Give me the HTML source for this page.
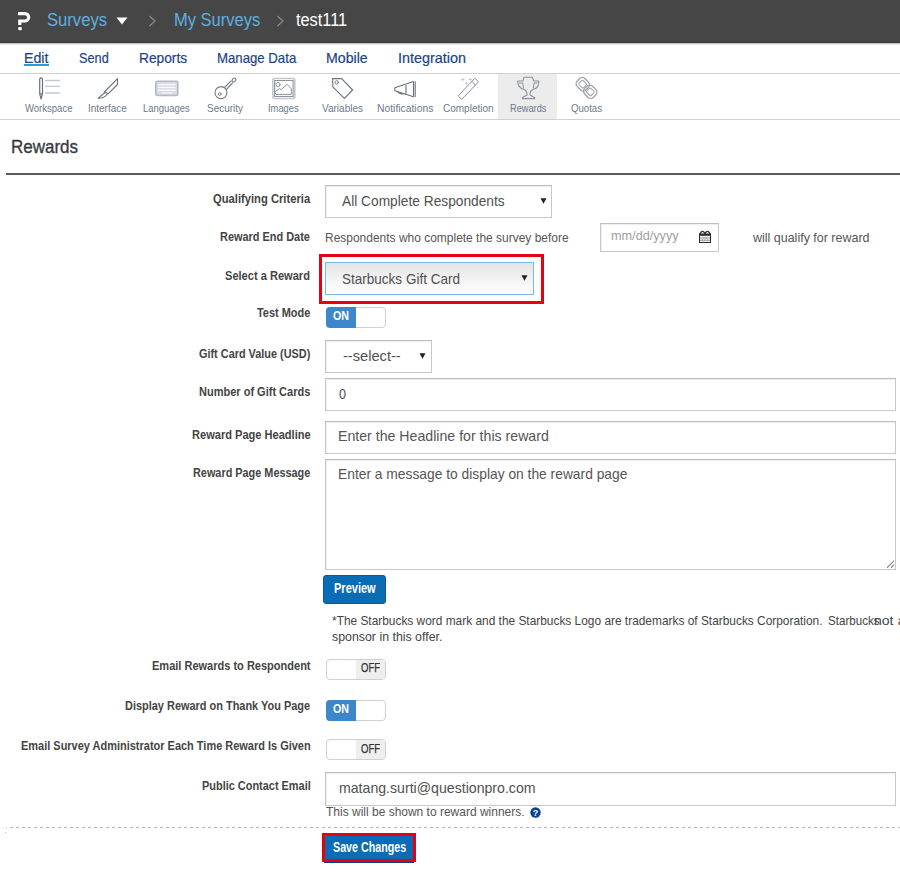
<!DOCTYPE html><html><head><meta charset="utf-8"><style>
html,body{margin:0;padding:0;background:#fff;width:900px;height:874px;overflow:hidden;position:relative;font-family:"Liberation Sans",sans-serif;}
.t{position:absolute;white-space:nowrap;transform-origin:0 0;}
.b{position:absolute;box-sizing:border-box;}
</style></head><body>
<div class="b" style="left:0px;top:0px;width:900px;height:43px;background:#464646;"></div>
<div class="b" style="left:0px;top:42px;width:900px;height:1px;background:#3a3a3a;"></div>
<div class="b" style="left:0px;top:43px;width:900px;height:1px;background:#c4c4c4;"></div>
<div class="b" style="left:0px;top:44px;width:900px;height:1px;background:#eeeeee;"></div>
<div class="t" style="left:47.00px;top:11.00px;font-size:18px;line-height:18px;color:#5eb0e0;transform:scaleX(0.9234);">Surveys</div>
<svg class="b" style="left:116px;top:17px" width="12" height="8"><path d="M0.5 0.5 L11.5 0.5 L6 7.5Z" fill="#fff"/></svg>
<svg class="b" style="left:148px;top:15px" width="9" height="12"><path d="M1.5 1 L7 6 L1.5 11" fill="none" stroke="#8a8a8a" stroke-width="1.3"/></svg>
<div class="t" style="left:173.80px;top:11.00px;font-size:18px;line-height:18px;color:#5eb0e0;transform:scaleX(0.9165);">My Surveys</div>
<svg class="b" style="left:276px;top:15px" width="9" height="12"><path d="M1.5 1 L7 6 L1.5 11" fill="none" stroke="#8a8a8a" stroke-width="1.3"/></svg>
<div class="t" style="left:295.60px;top:11.00px;font-size:18px;line-height:18px;color:#fff;transform:scaleX(0.9070);">test111</div>
<svg class="b" style="left:0;top:0" width="40" height="43"><path d="M18 13.6 H25 A3.7 3.7 0 0 1 25 21 H19.8 V25" fill="none" stroke="#fff" stroke-width="3.2"/><rect x="18.2" y="26.9" width="3.6" height="3.4" rx="1" fill="#fff"/></svg>
<div class="t" style="left:24.40px;top:50.00px;font-size:15px;line-height:15px;color:#1b4487;transform:scaleX(0.9469);-webkit-text-stroke:0.2px #1b4487;">Edit</div>
<div class="b" style="left:24px;top:64px;width:25px;height:2px;background:#2b9ad8;"></div>
<div class="t" style="left:78.60px;top:50.00px;font-size:15px;line-height:15px;color:#1b4487;transform:scaleX(0.8480);-webkit-text-stroke:0.2px #1b4487;">Send</div>
<div class="t" style="left:138.90px;top:50.00px;font-size:15px;line-height:15px;color:#1b4487;transform:scaleX(0.9162);-webkit-text-stroke:0.2px #1b4487;">Reports</div>
<div class="t" style="left:216.70px;top:50.00px;font-size:15px;line-height:15px;color:#1b4487;transform:scaleX(0.8796);-webkit-text-stroke:0.2px #1b4487;">Manage Data</div>
<div class="t" style="left:326.00px;top:50.00px;font-size:15px;line-height:15px;color:#1b4487;transform:scaleX(0.9440);-webkit-text-stroke:0.2px #1b4487;">Mobile</div>
<div class="t" style="left:397.70px;top:50.00px;font-size:15px;line-height:15px;color:#1b4487;transform:scaleX(0.9594);-webkit-text-stroke:0.2px #1b4487;">Integration</div>
<div class="b" style="left:0px;top:73px;width:900px;height:1px;background:#d0d0d0;"></div>
<div class="b" style="left:498px;top:74px;width:59px;height:45px;background:#ececec;"></div>
<div class="t" style="left:25.00px;top:102.50px;font-size:11px;line-height:11px;color:#6b7a8c;transform:scaleX(0.8662);">Workspace</div>
<div class="t" style="left:88.30px;top:102.50px;font-size:11px;line-height:11px;color:#6b7a8c;transform:scaleX(0.9044);">Interface</div>
<div class="t" style="left:143.00px;top:102.50px;font-size:11px;line-height:11px;color:#6b7a8c;transform:scaleX(0.8595);">Languages</div>
<div class="t" style="left:206.80px;top:102.50px;font-size:11px;line-height:11px;color:#6b7a8c;transform:scaleX(0.9041);">Security</div>
<div class="t" style="left:268.30px;top:102.50px;font-size:11px;line-height:11px;color:#6b7a8c;transform:scaleX(0.8509);">Images</div>
<div class="t" style="left:321.70px;top:102.50px;font-size:11px;line-height:11px;color:#6b7a8c;transform:scaleX(0.9124);">Variables</div>
<div class="t" style="left:376.70px;top:102.50px;font-size:11px;line-height:11px;color:#6b7a8c;transform:scaleX(0.9400);">Notifications</div>
<div class="t" style="left:443.00px;top:102.50px;font-size:11px;line-height:11px;color:#6b7a8c;transform:scaleX(0.9091);">Completion</div>
<div class="t" style="left:510.00px;top:102.50px;font-size:11px;line-height:11px;color:#6b7a8c;transform:scaleX(0.8388);">Rewards</div>
<div class="t" style="left:571.00px;top:102.50px;font-size:11px;line-height:11px;color:#6b7a8c;transform:scaleX(0.8739);">Quotas</div>
<div class="b" style="left:0px;top:119px;width:900px;height:1px;background:#d0d0d0;"></div>
<svg class="b" style="left:0;top:74px" width="900" height="45" fill="none" stroke-linejoin="round" stroke-linecap="round">
<g transform="translate(0,-74)">
<!-- workspace -->
<path d="M39.7 93.8 V79 Q41.1 76.6 42.5 79 V93.8 Z M39.7 93.8 L41.1 99 L42.5 93.8" stroke="#68717e" stroke-width="1.2"/>
<path d="M45.5 80.5H59.5 M45.5 86.3H59.5 M45.5 93H59.5" stroke="#c3c8d0" stroke-width="1.3"/>
<!-- interface -->
<path d="M117.5 78.7 V84.5 L108.3 93.7 M117.5 78.7 L104.3 92 M104.3 92 L108.3 93.7 M105 92.5 L98.2 98.2 Q104 98.5 107.5 94" stroke="#68717e" stroke-width="1.1"/>
<!-- languages keyboard -->
<rect x="155.8" y="81.3" width="22" height="14.2" rx="1.5" fill="#d9dde3" stroke="#b3b9c2" stroke-width="1.6"/>
<path d="M158.5 84.6H175 M158.5 87.4H175 M158.5 90.2H175" stroke="#fbfbfc" stroke-width="1.3" stroke-dasharray="1.5 1.1"/>
<path d="M161.5 93H172" stroke="#f4f5f7" stroke-width="1.1"/>
<!-- security key -->
<circle cx="221" cy="92.6" r="6" stroke="#737b87" stroke-width="1.1"/>
<circle cx="219.7" cy="94" r="1.4" stroke="#737b87" stroke-width="0.9"/>
<path d="M224.5 87.5 L231 80.8 M226.3 89.6 L232.5 83" stroke="#737b87" stroke-width="1.1"/>
<ellipse cx="234" cy="80" rx="2.2" ry="1.6" transform="rotate(-45 234 80)" stroke="#737b87" stroke-width="1.1"/>
<!-- images -->
<rect x="272.8" y="78.5" width="22" height="20" rx="2" stroke="#c3c8d0" stroke-width="1.6"/>
<rect x="274.6" y="80.5" width="18.5" height="16" stroke="#8b929d" stroke-width="1.1"/>
<circle cx="278" cy="84.6" r="2.1" stroke="#8b929d" stroke-width="1"/>
<path d="M275 92 L279.5 88.5 L281.3 89.6 L287 84.3 L291.3 88.8 V94.4 H276.3 Z" stroke="#8b929d" stroke-width="1"/>
<!-- variables tag -->
<path d="M332.6 78.6 H341.6 L352.6 90 L344.5 98.3 L332.8 86.8 Z" stroke="#68717e" stroke-width="1.1"/>
<circle cx="336.7" cy="82.4" r="1.7" stroke="#68717e" stroke-width="0.9"/>
<!-- notifications megaphone -->
<path d="M413.5 81.5 L394.8 87.8 V90.8 L413.5 96.8 Z M406 85.5 V93.6 M415.2 81.8 V96.5" stroke="#68717e" stroke-width="1.1"/>
<path d="M398 91.8 Q399 94.6 403.5 93.7" stroke="#68717e" stroke-width="1.1"/>
<!-- completion wand -->
<path d="M458.5 95.5 L474.8 78.3 L478.5 81.8 L462 99 Z M471.8 81.3 L475.3 85" stroke="#8b929d" stroke-width="1"/>
<path d="M461.5 79.5 h2.6 M462.8 78.2 v2.6 M469 79.5 h2.6 M470.3 78.2 v2.6 M465.3 83.5 h2 M466.3 82.5 v2.6 M477.3 87.6 h0.6" stroke="#c3c8d0" stroke-width="1"/>
<!-- rewards trophy -->
<path d="M524 77.3 H532.3 L533.8 81 H538.8 Q539.5 87.5 533 89.5 Q529.5 91.5 530 95 L534.5 97.5 V98.6 H522.5 V97.5 L527 95 Q527.5 91.5 524 89.5 Q517.5 87.5 517.8 81 H522.8 Z" stroke="#8b929d" stroke-width="1.1"/>
<path d="M519.5 83 H522.7 L523.5 88 M537.2 83 H534 L533.3 88" stroke="#8b929d" stroke-width="1"/>
<!-- quotas chain -->
<g transform="rotate(-45 586.5 88)">
<rect x="581" y="76.5" width="11" height="12.5" rx="4" stroke="#9aa1ab" stroke-width="1.3"/>
<rect x="583.6" y="79.3" width="5.8" height="6.5" rx="1.2" stroke="#9aa1ab" stroke-width="1"/>
<rect x="581" y="87" width="11" height="12.5" rx="4" stroke="#9aa1ab" stroke-width="1.3"/>
<rect x="583.6" y="90.2" width="5.8" height="6.5" rx="1.2" stroke="#9aa1ab" stroke-width="1"/>
</g>
</g></svg>
<div class="t" style="left:10.50px;top:138.25px;font-size:18.5px;line-height:18.5px;color:#373b42;transform:scaleX(0.9180);-webkit-text-stroke:0.35px #373b42;">Rewards</div>
<div class="b" style="left:6px;top:173px;width:894px;height:2px;background:#5a5a5a;"></div>
<div class="t" style="left:213.10px;top:192.00px;font-size:13px;line-height:13px;color:#444;font-weight:bold;transform:scaleX(0.8619);">Qualifying Criteria</div>
<div class="t" style="left:220.40px;top:230.00px;font-size:13px;line-height:13px;color:#444;font-weight:bold;transform:scaleX(0.8408);">Reward End Date</div>
<div class="t" style="left:225.40px;top:269.00px;font-size:13px;line-height:13px;color:#444;font-weight:bold;transform:scaleX(0.8515);">Select a Reward</div>
<div class="t" style="left:257.00px;top:306.00px;font-size:13px;line-height:13px;color:#444;font-weight:bold;transform:scaleX(0.8419);">Test Mode</div>
<div class="t" style="left:199.00px;top:347.00px;font-size:13px;line-height:13px;color:#444;font-weight:bold;transform:scaleX(0.8373);">Gift Card Value (USD)</div>
<div class="t" style="left:199.00px;top:385.00px;font-size:13px;line-height:13px;color:#444;font-weight:bold;transform:scaleX(0.8468);">Number of Gift Cards</div>
<div class="t" style="left:191.70px;top:428.00px;font-size:13px;line-height:13px;color:#444;font-weight:bold;transform:scaleX(0.8506);">Reward Page Headline</div>
<div class="t" style="left:193.00px;top:466.00px;font-size:13px;line-height:13px;color:#444;font-weight:bold;transform:scaleX(0.8366);">Reward Page Message</div>
<div class="t" style="left:151.80px;top:659.00px;font-size:13px;line-height:13px;color:#444;font-weight:bold;transform:scaleX(0.8473);">Email Rewards to Respondent</div>
<div class="t" style="left:125.20px;top:699.00px;font-size:13px;line-height:13px;color:#444;font-weight:bold;transform:scaleX(0.8420);">Display Reward on Thank You Page</div>
<div class="t" style="left:20.60px;top:739.00px;font-size:13px;line-height:13px;color:#444;font-weight:bold;transform:scaleX(0.8441);">Email Survey Administrator Each Time Reward Is Given</div>
<div class="t" style="left:201.60px;top:779.00px;font-size:13px;line-height:13px;color:#444;font-weight:bold;transform:scaleX(0.8408);">Public Contact Email</div>
<div class="b" style="left:325px;top:185px;width:227px;height:33px;border:1px solid #c8c8c8;border-top-color:#bdbdbd;background:#fff;box-shadow:inset 1px 1px 1px rgba(0,0,0,0.07);"></div>
<div class="t" style="left:341.80px;top:193.00px;font-size:15px;line-height:15px;color:#505050;transform:scaleX(0.9161);">All Complete Respondents</div>
<svg class="b" style="left:539.5px;top:198px" width="7" height="6"><path d="M0.5 0.3 L6.5 0.3 L3.5 5.8Z" fill="#222"/></svg>
<div class="t" style="left:325.00px;top:230.85px;font-size:13.3px;line-height:13.3px;color:#555;transform:scaleX(0.9006);">Respondents who complete the survey before</div>
<div class="b" style="left:600px;top:223px;width:119px;height:29px;border:1px solid #c8c8c8;border-top-color:#bdbdbd;background:#fff;box-shadow:inset 1px 1px 1px rgba(0,0,0,0.07);"></div>
<div class="t" style="left:611.00px;top:229.00px;font-size:13px;line-height:13px;color:#a0a0a0;transform:scaleX(0.9747);">mm/dd/yyyy</div>
<svg class="b" style="left:698px;top:230px" width="14" height="14"><path d="M2 4.5 Q2.5 1.3 4.5 1.3 Q6.5 1.3 7 4.5 Q7.5 1.3 9.5 1.3 Q11.5 1.3 12 4.5" fill="none" stroke="#333" stroke-width="1.3"/><rect x="1.5" y="4" width="11" height="8.5" fill="#fff" stroke="#2a2a2a" stroke-width="1"/><rect x="1.5" y="4" width="11" height="1.8" fill="#2a2a2a"/><path d="M2 8H12M2 10.2H12" stroke="#666" stroke-width="0.8"/><path d="M4.5 6V12M7 6V12M9.5 6V12" stroke="#bbb" stroke-width="0.6"/></svg>
<div class="t" style="left:753.26px;top:230.85px;font-size:13.3px;line-height:13.3px;color:#555;transform:scaleX(0.9386);">will qualify for reward</div>
<div class="b" style="left:319px;top:254px;width:225px;height:50px;border:3px solid #e60012;"></div>
<div class="b" style="left:325px;top:262px;width:209px;height:33px;border:1px solid #7db8ea;background:linear-gradient(#e4e4e4,#fafafa 78%,#fff);"></div>
<div class="t" style="left:342.10px;top:271.00px;font-size:15px;line-height:15px;color:#505050;transform:scaleX(0.9016);">Starbucks Gift Card</div>
<svg class="b" style="left:520.5px;top:275px" width="7" height="6"><path d="M0.5 0.3 L6.5 0.3 L3.5 5.8Z" fill="#222"/></svg>
<div class="b" style="left:326px;top:307px;width:60px;height:21px;border:1px solid #cfcfcf;border-radius:4px;background:#fff;overflow:hidden;"></div>
<div class="b" style="left:326px;top:307px;width:30px;height:21px;background:#3d86c9;border-radius:4px 0 0 4px;"></div>
<div class="t" style="left:332.60px;top:309.75px;font-size:12.5px;line-height:12.5px;color:#fff;font-weight:bold;transform:scaleX(0.8533);">ON</div>
<div class="b" style="left:325px;top:340px;width:107px;height:33px;border:1px solid #c8c8c8;border-top-color:#bdbdbd;background:#fff;box-shadow:inset 1px 1px 1px rgba(0,0,0,0.07);"></div>
<div class="t" style="left:342.70px;top:348.00px;font-size:15px;line-height:15px;color:#505050;transform:scaleX(0.9751);">--select--</div>
<svg class="b" style="left:419px;top:353px" width="7" height="6"><path d="M0.5 0.3 L6.5 0.3 L3.5 5.8Z" fill="#222"/></svg>
<div class="b" style="left:325px;top:378px;width:571px;height:33px;border:1px solid #c8c8c8;border-top-color:#bdbdbd;background:#fff;box-shadow:inset 1px 1px 1px rgba(0,0,0,0.07);"></div>
<div class="t" style="left:338.50px;top:386.00px;font-size:15px;line-height:15px;color:#505050;transform:scaleX(0.8408);">0</div>
<div class="b" style="left:325px;top:421px;width:571px;height:33px;border:1px solid #c8c8c8;border-top-color:#bdbdbd;background:#fff;box-shadow:inset 1px 1px 1px rgba(0,0,0,0.07);"></div>
<div class="t" style="left:338.40px;top:428.00px;font-size:15px;line-height:15px;color:#555;transform:scaleX(0.9435);">Enter the Headline for this reward</div>
<div class="b" style="left:325px;top:459px;width:571px;height:111px;border:1px solid #c8c8c8;border-top-color:#bdbdbd;background:#fff;box-shadow:inset 1px 1px 1px rgba(0,0,0,0.07);"></div>
<div class="t" style="left:338.40px;top:466.00px;font-size:15px;line-height:15px;color:#555;transform:scaleX(0.9205);">Enter a message to display on the reward page</div>
<svg class="b" style="left:885px;top:559px" width="10" height="10"><path d="M8.8 2.2 L2.3 8.5 M8.8 6 L6.3 8.5" stroke="#8a8a8a" stroke-width="1.1" stroke-linecap="round"/></svg>
<div class="b" style="left:323px;top:575px;width:63px;height:29px;background:#0b6cb6;border:1px solid #0a5a98;border-radius:3px;"></div>
<div class="t" style="left:334.30px;top:581.00px;font-size:14px;line-height:14px;color:#fff;font-weight:bold;transform:scaleX(0.7869);">Preview</div>
<div class="t" style="left:332.30px;top:613.85px;font-size:13.3px;line-height:13.3px;color:#444;transform:scaleX(0.8945);">*The Starbucks word mark and the Starbucks Logo are trademarks of Starbucks Corporation.</div>
<div class="t" style="left:827.50px;top:613.85px;font-size:13.3px;line-height:13.3px;color:#444;transform:scaleX(0.8711);">Starbucks</div>
<div class="t" style="left:874.00px;top:613.85px;font-size:13.3px;line-height:13.3px;color:#444;transform:scaleX(1.0548);">not</div>
<div class="t" style="left:897.80px;top:613.85px;font-size:13.3px;line-height:13.3px;color:#444;">a</div>
<div class="t" style="left:332.30px;top:629.85px;font-size:13.3px;line-height:13.3px;color:#444;transform:scaleX(0.9295);">sponsor in this offer.</div>
<div class="b" style="left:326px;top:659px;width:60px;height:21px;border:1px solid #cfcfcf;border-radius:4px;background:#fff;"></div>
<div class="b" style="left:356px;top:660px;width:29px;height:19px;background:#eeeeee;border-radius:0 3px 3px 0;"></div>
<div class="t" style="left:360.80px;top:662.00px;font-size:12px;line-height:12px;color:#333;transform:scaleX(0.7917);-webkit-text-stroke:0.25px #333;">OFF</div>
<div class="b" style="left:326px;top:699.5px;width:60px;height:21px;border:1px solid #cfcfcf;border-radius:4px;background:#fff;overflow:hidden;"></div>
<div class="b" style="left:326px;top:699.5px;width:30px;height:21px;background:#3d86c9;border-radius:4px 0 0 4px;"></div>
<div class="t" style="left:332.60px;top:702.75px;font-size:12.5px;line-height:12.5px;color:#fff;font-weight:bold;transform:scaleX(0.8533);">ON</div>
<div class="b" style="left:326px;top:739.3px;width:60px;height:21px;border:1px solid #cfcfcf;border-radius:4px;background:#fff;"></div>
<div class="b" style="left:356px;top:740.3px;width:29px;height:19px;background:#eeeeee;border-radius:0 3px 3px 0;"></div>
<div class="t" style="left:360.80px;top:743.00px;font-size:12px;line-height:12px;color:#333;transform:scaleX(0.7917);-webkit-text-stroke:0.25px #333;">OFF</div>
<div class="b" style="left:325px;top:772px;width:571px;height:34px;border:1px solid #c8c8c8;border-top-color:#bdbdbd;background:#fff;box-shadow:inset 1px 1px 1px rgba(0,0,0,0.07);"></div>
<div class="t" style="left:338.50px;top:780.00px;font-size:15px;line-height:15px;color:#505050;transform:scaleX(0.9418);">matang.surti@questionpro.com</div>
<div class="t" style="left:325.70px;top:804.85px;font-size:13.3px;line-height:13.3px;color:#555;transform:scaleX(0.9017);">This will be shown to reward winners.</div>
<svg class="b" style="left:530px;top:807px" width="11" height="11"><circle cx="5.5" cy="5.5" r="5.2" fill="#0b4391"/><text x="5.5" y="9" font-size="9" font-weight="bold" text-anchor="middle" fill="#fff" font-family="Liberation Sans">?</text></svg>
<div class="b" style="left:10px;top:827px;width:890px;height:1px;background:repeating-linear-gradient(to right,#b3b3b3 0 3px,transparent 3px 6px);"></div>
<div class="b" style="left:6px;top:827px;width:1px;height:1px;background:#bbb;"></div>
<div class="b" style="left:5px;top:832px;width:1px;height:1px;background:#bbb;"></div>
<div class="b" style="left:324px;top:860px;width:90px;height:3px;background:#0d3d78;"></div>
<div class="b" style="left:322px;top:833px;width:94px;height:29px;border:3px solid #e60012;background:#0b6cb6;"></div>
<div class="t" style="left:333.10px;top:840.00px;font-size:14px;line-height:14px;color:#fff;font-weight:bold;transform:scaleX(0.7639);">Save Changes</div>
</body></html>
